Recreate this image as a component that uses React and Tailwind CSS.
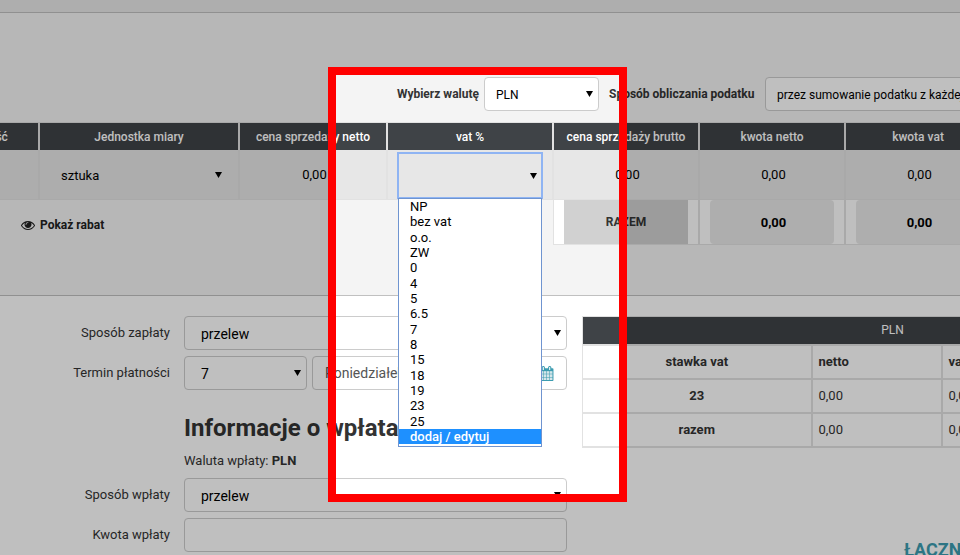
import React, { useState } from "react";
import clsx from "clsx";

const VAT_RATES = [
	"NP",
	"bez vat",
	"o.o.",
	"ZW",
	"0",
	"4",
	"5",
	"6.5",
	"7",
	"8",
	"15",
	"18",
	"19",
	"23",
	"25",
	"dodaj / edytuj",
];

const SUMMARY_ROWS = [
	{ rate: "23", netto: "0,00", vat: "0,00", brutto: "0,00" },
	{ rate: "razem", netto: "0,00", vat: "0,00", brutto: "0,00" },
];

const EyeIcon = () => (
	<svg viewBox="0 0 1792 1792" className="w-[14px] h-[14px]" fill="currentColor">
		<path d="M1664 960q-152-236-381-353 61 104 61 225 0 185-131.5 316.5t-316.5 131.5-316.5-131.5-131.5-316.5q0-121 61-225-229 117-381 353 133 205 333.5 326.5t434.5 121.5 434.5-121.5 333.5-326.5zm-720-384q0-20-14-34t-34-14q-125 0-214.5 89.5t-89.5 214.5q0 20 14 34t34 14 34-14 14-34q0-86 61-147t147-61q20 0 34-14t14-34zm848 384q0 34-20 69-140 230-376.5 368.5t-499.5 138.5-499.5-139-376.5-368q-20-35-20-69t20-69q140-229 376.5-368t499.5-139 499.5 139 376.5 368q20 35 20 69z" />
	</svg>
);

const CalendarIcon = () => (
	<svg viewBox="0 0 1792 1792" className="w-[15px] h-[15px]">
		<path
			fill="#d5e6ea"
			d="M192 640h1408v1024h-1408z"
		/>
		<path
			fill="currentColor"
			d="M192 1664h288v-288h-288v288zm352 0h320v-288h-320v288zm-352-352h288v-320h-288v320zm352 0h320v-320h-320v320zm-352-384h288v-288h-288v288zm736 736h320v-288h-320v288zm-384-736h320v-288h-320v288zm768 736h288v-288h-288v288zm-384-352h320v-320h-320v320zm-352-864v-288q0-13-9.5-22.5t-22.5-9.5h-64q-13 0-22.5 9.5t-9.5 22.5v288q0 13 9.5 22.5t22.5 9.5h64q13 0 22.5-9.5t9.5-22.5zm736 864h288v-320h-288v320zm-384-384h320v-288h-320v288zm384 0h288v-288h-288v288zm32-480v-288q0-13-9.5-22.5t-22.5-9.5h-64q-13 0-22.5 9.5t-9.5 22.5v288q0 13 9.5 22.5t22.5 9.5h64q13 0 22.5-9.5t9.5-22.5zm384-64v1280q0 52-38 90t-90 38h-1408q-52 0-90-38t-38-90v-1280q0-52 38-90t90-38h128v-96q0-66 47-113t113-47h64q66 0 113 47t47 113v96h384v-96q0-66 47-113t113-47h64q66 0 113 47t47 113v96h128q52 0 90 38t38 90z"
		/>
	</svg>
);

const SelectBox = ({ id, label, options, className, selectClass }) => (
	<div className={clsx("relative", className)}>
		<select
			id={id}
			aria-label={label}
			className={clsx(
				"block w-full appearance-none pt-0.5 text-black outline-none",
				selectClass
			)}
		>
			{options.map((option) => (
				<option key={option}>{option}</option>
			))}
		</select>
		<svg
			viewBox="0 0 7 6"
			className="pointer-events-none absolute right-[6px] top-1/2 -mt-[3px] w-[7px] h-[6px]"
		>
			<path d="M0 0h7L3.5 6z" fill="#000" />
		</svg>
	</div>
);

const boxClass = "h-[34px] rounded border border-[#ccc] bg-white";

const FormRow = ({ id, label, children }) => (
	<div className="flex items-center gap-[14px]">
		<label htmlFor={id} className="w-[170px] shrink-0 text-right">
			{label}
		</label>
		<div className="flex grow gap-[5px]">{children}</div>
	</div>
);

const HeadCell = ({ children }) => (
	<th className="h-[27px] border-r-2 border-[#e2e2e2] bg-[#3f4347] p-0 text-xs font-medium text-white whitespace-nowrap">
		{children}
	</th>
);

const BodyCell = ({ children, className }) => (
	<td
		className={clsx(
			"h-[50px] border-r-2 border-b border-[#e2e2e2] bg-[#e7e7e7] py-0 pr-0 text-center text-black",
			className
		)}
	>
		{children}
	</td>
);

const TotalCell = ({ label }) => (
	<td className="border-r-2 border-b border-[#e2e2e2] bg-white px-[10px] py-0">
		<input
			aria-label={label}
			readOnly
			value="0,00"
			className="block h-[44px] w-full rounded bg-[#e9e9e9] pl-[3px] text-center font-bold text-black outline-none"
		/>
	</td>
);

const VatSelect = () => {
	const [active, setActive] = useState("dodaj / edytuj");

	return (
		<div className="relative mx-[9px] pt-0.5">
			<SelectBox
				label="vat %"
				options={[""]}
				selectClass="h-[47px] border-2 border-[#8fb4f3] bg-[#e7e7e7]"
			/>
			<ul
				role="listbox"
				aria-label="Stawki vat"
				className="absolute top-[48px] inset-x-px z-10 flex h-[249px] flex-col border border-[#6f94d0] bg-white pb-0.5 text-left text-black"
			>
				{VAT_RATES.map((rate) => (
					<li
						key={rate}
						role="option"
						aria-selected={rate === active}
						onMouseEnter={() => setActive(rate)}
						className={clsx(
							"flex min-h-0 flex-1 items-center pl-[11px] leading-none",
							rate === active && "bg-[#1e90ff] font-medium text-white"
						)}
					>
						{rate}
					</li>
				))}
			</ul>
		</div>
	);
};

const ItemsTable = () => (
	<table className="-ml-12 w-[1040px] min-w-full table-fixed border-separate border-spacing-0 border-t border-[#e2e2e2]">
		<colgroup>
			<col className="w-[88px]" />
			<col className="w-[200px]" />
			<col className="w-[148px]" />
			<col className="w-[166px]" />
			<col className="w-[146px]" />
			<col className="w-[146px]" />
			<col className="w-[146px]" />
		</colgroup>
		<thead>
			<tr>
				<HeadCell>Ilość</HeadCell>
				<HeadCell>Jednostka miary</HeadCell>
				<HeadCell>cena sprzedaży netto</HeadCell>
				<HeadCell>vat %</HeadCell>
				<HeadCell>cena sprzedaży brutto</HeadCell>
				<HeadCell>kwota netto</HeadCell>
				<HeadCell>kwota vat</HeadCell>
			</tr>
		</thead>
		<tbody>
			<tr>
				<BodyCell />
				<BodyCell className="pl-[21px]">
					<SelectBox
						label="Jednostka miary"
						options={["sztuka"]}
						className="mr-[10px]"
						selectClass="h-[34px]"
					/>
				</BodyCell>
				<BodyCell className="pl-[3px]">0,00</BodyCell>
				<BodyCell className="pl-0">
					<VatSelect />
				</BodyCell>
				<BodyCell className="pl-[3px]">0,00</BodyCell>
				<BodyCell className="pl-[3px]">0,00</BodyCell>
				<BodyCell className="pl-[3px]">0,00</BodyCell>
			</tr>
			<tr>
				<td colSpan={4} className="border-r border-[#e2e2e2] pt-1 pb-0 pl-[69px]">
					<button
						type="button"
						className="flex items-center gap-[5px] text-xs font-bold text-[#222]"
					>
						<EyeIcon />
						Pokaż rabat
					</button>
				</td>
				<td className="border-r-2 border-b border-[#e2e2e2] bg-white px-[10px] py-0">
					<div className="flex h-[44px] items-center justify-center bg-[#d1d1d1] text-xs font-bold">
						RAZEM
					</div>
				</td>
				<TotalCell label="Razem kwota netto" />
				<TotalCell label="Razem kwota vat" />
			</tr>
		</tbody>
	</table>
);

const SummaryTable = () => (
	<table className="w-[620px] table-fixed border-collapse border border-[#e2e2e2]">
		<colgroup>
			<col className="w-[229px]" />
			<col className="w-[130px]" />
			<col className="w-[130px]" />
			<col className="w-[131px]" />
		</colgroup>
		<thead>
			<tr>
				<th
					colSpan={4}
					className="h-[28px] border-b-2 border-[#e2e2e2] bg-[#3f4347] p-0 text-xs font-normal text-white"
				>
					PLN
				</th>
			</tr>
			<tr className="text-left">
				<th className="h-[34px] border-2 border-l border-[#e2e2e2] p-0 text-center">
					stawka vat
				</th>
				<th className="border-2 border-[#e2e2e2] px-[6px] py-0">netto</th>
				<th className="border-2 border-[#e2e2e2] px-[6px] py-0">vat</th>
				<th className="border-2 border-[#e2e2e2] px-[6px] py-0">brutto</th>
			</tr>
		</thead>
		<tbody>
			{SUMMARY_ROWS.map((row) => (
				<tr key={row.rate}>
					<th className="h-[34px] border-2 border-l border-[#e2e2e2] p-0">
						{row.rate}
					</th>
					<td className="border-2 border-[#e2e2e2] px-[6px] py-0">{row.netto}</td>
					<td className="border-2 border-[#e2e2e2] px-[6px] py-0">{row.vat}</td>
					<td className="border-2 border-[#e2e2e2] px-[6px] py-0">
						{row.brutto}
					</td>
				</tr>
			))}
		</tbody>
	</table>
);

const App = () => {
	return (
		<div className="relative h-screen overflow-hidden bg-white font-['Roboto',sans-serif] text-[13px] leading-5 text-[#333]">
			<div className="h-[13px] border-b border-[#c0c0c0] bg-[#e9e9e9]" />

			<section className="h-[283px] border-b border-[#c0c0c0] bg-[#f4f4f4] pt-16">
				<div className="mb-[11px] flex items-center text-xs font-bold whitespace-nowrap">
					<label htmlFor="currency" className="w-[484px] shrink-0 pr-[5px] text-right">
						Wybierz walutę
					</label>
					<SelectBox
						id="currency"
						options={["PLN"]}
						className="mr-[10px] w-[115px] shrink-0"
						selectClass={clsx(boxClass, "pl-[11px] font-normal")}
					/>
					<label htmlFor="tax-method" className="w-[156px] shrink-0">
						Sposób obliczania podatku
					</label>
					<SelectBox
						id="tax-method"
						options={["przez sumowanie podatku z każdej pozycji"]}
						className="w-[290px] shrink-0"
						selectClass={clsx(boxClass, "pl-[11px] font-normal")}
					/>
				</div>
				<ItemsTable />
			</section>

			<section className="flex gap-[15px] pt-5">
				<div className="flex w-[567px] shrink-0 flex-col gap-[6px]">
					<FormRow id="payment" label="Sposób zapłaty">
						<SelectBox
							id="payment"
							options={["przelew"]}
							className="grow"
							selectClass={clsx(boxClass, "pl-4 text-sm")}
						/>
					</FormRow>
					<FormRow id="term" label="Termin płatności">
						<SelectBox
							id="term"
							options={["7"]}
							className="w-[123px]"
							selectClass={clsx(boxClass, "pl-4 text-sm")}
						/>
						<div className={clsx(boxClass, "flex grow items-center px-3")}>
							<input
								aria-label="Data płatności"
								defaultValue="Poniedziałek"
								className="min-w-0 grow text-sm text-[#555] outline-none"
							/>
							<button
								type="button"
								aria-label="Kalendarz"
								className="text-[#3c9cb0]"
							>
								<CalendarIcon />
							</button>
						</div>
					</FormRow>
					<h2 className="mt-4 ml-[184px] text-2xl leading-[33px] font-bold">
						Informacje o wpłatach
					</h2>
					<p className="mb-px ml-[184px]">
						Waluta wpłaty: <b>PLN</b>
					</p>
					<FormRow id="deposit" label="Sposób wpłaty">
						<SelectBox
							id="deposit"
							options={["przelew"]}
							className="grow"
							selectClass={clsx(boxClass, "pl-4 text-sm")}
						/>
					</FormRow>
					<FormRow id="amount" label="Kwota wpłaty">
						<input id="amount" className={clsx(boxClass, "grow px-4 text-sm")} />
					</FormRow>
				</div>

				<div className="shrink-0">
					<SummaryTable />
					<p className="mt-[90px] pl-[322px] text-lg leading-6 font-bold text-[#3c9cb0]">
						ŁĄCZNIE
					</p>
				</div>
			</section>

			{/* highlighted area, everything around it is dimmed */}
			<div className="pointer-events-none absolute top-[67px] left-[328px] z-20 h-[435px] w-[299px] border-8 border-[#f00] shadow-[0_0_0_2000px_rgba(0,0,0,0.25)]" />
		</div>
	);
};

export default App;
